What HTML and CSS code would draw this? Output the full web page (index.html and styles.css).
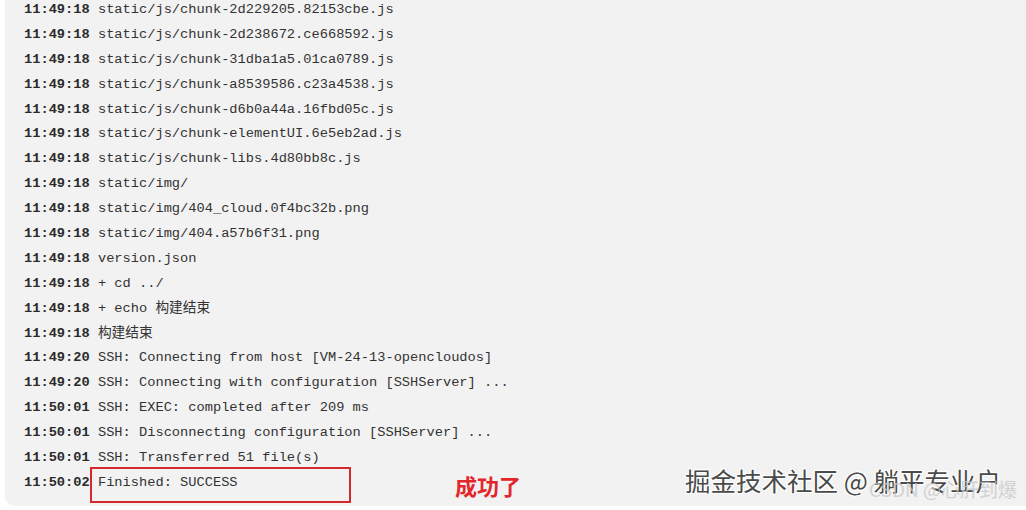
FILE: index.html
```html
<!DOCTYPE html>
<html lang="zh-CN">
<head>
<meta charset="utf-8">
<title>Console Output</title>
<link rel="stylesheet" href="styles.css">
</head>
<body>
<div class="panel">
  <div class="log">
    <div class="line"><b class="ts">11:49:18</b> static/js/chunk-2d229205.82153cbe.js</div>
    <div class="line"><b class="ts">11:49:18</b> static/js/chunk-2d238672.ce668592.js</div>
    <div class="line"><b class="ts">11:49:18</b> static/js/chunk-31dba1a5.01ca0789.js</div>
    <div class="line"><b class="ts">11:49:18</b> static/js/chunk-a8539586.c23a4538.js</div>
    <div class="line"><b class="ts">11:49:18</b> static/js/chunk-d6b0a44a.16fbd05c.js</div>
    <div class="line"><b class="ts">11:49:18</b> static/js/chunk-elementUI.6e5eb2ad.js</div>
    <div class="line"><b class="ts">11:49:18</b> static/js/chunk-libs.4d80bb8c.js</div>
    <div class="line"><b class="ts">11:49:18</b> static/img/</div>
    <div class="line"><b class="ts">11:49:18</b> static/img/404_cloud.0f4bc32b.png</div>
    <div class="line"><b class="ts">11:49:18</b> static/img/404.a57b6f31.png</div>
    <div class="line"><b class="ts">11:49:18</b> version.json</div>
    <div class="line"><b class="ts">11:49:18</b> + cd ../</div>
    <div class="line"><b class="ts">11:49:18</b> + echo 构建结束</div>
    <div class="line"><b class="ts">11:49:18</b> 构建结束</div>
    <div class="line"><b class="ts">11:49:20</b> SSH: Connecting from host [VM-24-13-opencloudos]</div>
    <div class="line"><b class="ts">11:49:20</b> SSH: Connecting with configuration [SSHServer] ...</div>
    <div class="line"><b class="ts">11:50:01</b> SSH: EXEC: completed after 209 ms</div>
    <div class="line"><b class="ts">11:50:01</b> SSH: Disconnecting configuration [SSHServer] ...</div>
    <div class="line"><b class="ts">11:50:01</b> SSH: Transferred 51 file(s)</div>
    <div class="line"><b class="ts">11:50:02</b> Finished: SUCCESS</div>
  </div>
</div>
<div class="highlight"></div>
<div class="note">成功了</div>
<div class="wm-main">掘金技术社区 @ 躺平专业户</div>
<div class="wm-csdn">CSDN @心肝到爆</div>
</body>
</html>
```

FILE: styles.css
```css
html, body {
  margin: 0;
  padding: 0;
  background: #ffffff;
  width: 1026px;
  height: 510px;
  overflow: hidden;
}

.panel {
  margin-left: 5px;
  height: 506px;
  background: #f2f2f2;
  border-bottom-left-radius: 10px;
  overflow: hidden;
}

.log {
  margin-top: -2px;
  padding-left: 19px;
  font-family: "Liberation Mono", "Noto Sans CJK SC", monospace;
  font-size: 13.7px;
  line-height: 24.9px;
  color: #333333;
}

.line {
  height: 24.9px;
  white-space: pre;
}

.ts {
  font-weight: bold;
  color: #2b2b2b;
}

.highlight {
  position: absolute;
  left: 90px;
  top: 467px;
  width: 257px;
  height: 32px;
  border: 2px solid #d42a2e;
}

.note {
  position: absolute;
  left: 455px;
  top: 470px;
  font-family: "Noto Sans CJK SC", sans-serif;
  font-weight: 700;
  font-size: 22px;
  line-height: 30px;
  color: #e3262c;
}

.wm-main {
  position: absolute;
  left: 685px;
  top: 464px;
  font-family: "Noto Sans CJK SC", sans-serif;
  font-size: 25.5px;
  line-height: 32px;
  color: #4a4a4a;
  text-shadow: 1px 1px 0 #ffffff, -1px -1px 0 #ffffff, 1px -1px 0 #ffffff, -1px 1px 0 #ffffff;
  white-space: nowrap;
}

.wm-csdn {
  position: absolute;
  left: 869px;
  top: 476px;
  font-family: "Noto Sans CJK SC", sans-serif;
  font-size: 19px;
  line-height: 26px;
  color: rgba(200, 200, 200, 0.8);
  white-space: nowrap;
}
```
